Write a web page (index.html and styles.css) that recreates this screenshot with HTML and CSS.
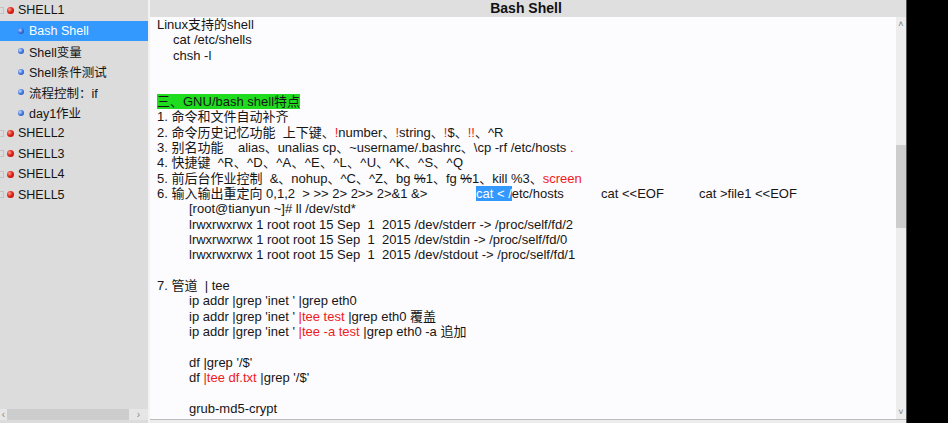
FILE: index.html
```html
<!DOCTYPE html>
<html>
<head>
<meta charset="utf-8">
<link rel="stylesheet" href="styles.css">
</head>
<body>
<div class="app">
  <aside class="side">
    <div class="tree">
      <div class="row top"><span class="exp"></span><span class="ball red"></span><span class="lbl">SHELL1</span></div>
      <div class="row child sel"><span class="ball blue"></span><span class="lbl">Bash Shell</span></div>
      <div class="row child"><span class="ball blue"></span><span class="lbl">Shell变量</span></div>
      <div class="row child"><span class="ball blue"></span><span class="lbl">Shell条件测试</span></div>
      <div class="row child"><span class="ball blue"></span><span class="lbl">流程控制：if</span></div>
      <div class="row child"><span class="ball blue"></span><span class="lbl">day1作业</span></div>
      <div class="row top"><span class="exp"></span><span class="ball red"></span><span class="lbl">SHELL2</span></div>
      <div class="row top"><span class="exp"></span><span class="ball red"></span><span class="lbl">SHELL3</span></div>
      <div class="row top"><span class="exp"></span><span class="ball red"></span><span class="lbl">SHELL4</span></div>
      <div class="row top"><span class="exp"></span><span class="ball red"></span><span class="lbl">SHELL5</span></div>
    </div>
    <div class="hscroll"><span class="arr">‹</span><span class="thumb"></span><span class="arr right">›</span></div>
  </aside>
  <main class="main">
    <div class="title">Bash Shell</div>
    <div class="body">
      <div class="doc">
<div class="ln">Linux支持的shell</div>
<div class="ln i1">cat /etc/shells</div>
<div class="ln i1">chsh -l</div>
<div class="ln"> </div>
<div class="ln"> </div>
<div class="ln"><span class="hl">三、GNU/bash shell特点</span></div>
<div class="ln">1. 命令和文件自动补齐</div>
<div class="ln">2. 命令历史记忆功能  上下键、<span class="r">!</span>number、<span class="r">!</span>string、<span class="r">!</span>$、<span class="r">!!</span>、^R</div>
<div class="ln">3. 别名功能    alias、unalias cp、~username/.bashrc、\cp -rf /etc/hosts <span class="r">.</span></div>
<div class="ln">4. 快捷键  <span class="ks">^R、^D、^A、^E、^L、^U、^K、^S、^Q</span></div>
<div class="ln">5. 前后台作业控制  &amp;、nohup、^C、^Z、bg <s>%</s>1、fg <s>%</s>1、kill %3、<span class="r">screen</span></div>
<div class="ln"><span class="tab t1">6. 输入输出重定向 0,1,2  &gt; &gt;&gt; 2&gt; 2&gt;&gt; 2&gt;&amp;1 &amp;&gt;</span><span class="tab t2"><span class="sel2">cat &lt; /</span>etc/hosts</span><span class="tab t3">cat &lt;&lt;EOF</span><span>cat &gt;file1 &lt;&lt;EOF</span></div>
<div class="ln i2">[root@tianyun ~]# ll /dev/std*</div>
<div class="ln i2">lrwxrwxrwx 1 root root 15 Sep  1  2015 /dev/stderr -&gt; /proc/self/fd/2</div>
<div class="ln i2">lrwxrwxrwx 1 root root 15 Sep  1  2015 /dev/stdin -&gt; /proc/self/fd/0</div>
<div class="ln i2">lrwxrwxrwx 1 root root 15 Sep  1  2015 /dev/stdout -&gt; /proc/self/fd/1</div>
<div class="ln"> </div>
<div class="ln">7. 管道  | tee</div>
<div class="ln i2">ip addr |grep 'inet ' |grep eth0</div>
<div class="ln i2">ip addr |grep 'inet ' <span class="r">|tee test</span> |grep eth0 覆盖</div>
<div class="ln i2">ip addr |grep 'inet ' <span class="r">|tee -a test</span> |grep eth0 -a 追加</div>
<div class="ln"> </div>
<div class="ln i2">df |grep '/$'</div>
<div class="ln i2">df <span class="r">|tee df.txt</span> |grep '/$'</div>
<div class="ln"> </div>
<div class="ln i2">grub-md5-crypt</div>
      </div>
      <div class="vscroll"><span class="varr">˄</span><span class="vthumb"></span><span class="varr down">˅</span></div>
    </div>
    <div class="foot"></div>
  </main>
  <div class="edge"></div>
</div>
</body>
</html>
```

FILE: styles.css
```css
* { box-sizing: border-box; }
html, body { margin: 0; padding: 0; }
body {
  width: 948px;
  height: 423px;
  overflow: hidden;
  background: #000;
  font-family: "Liberation Sans", "Noto Sans CJK SC", sans-serif;
  font-size: 13px;
  color: #161616;
}
.app {
  display: flex;
  width: 948px;
  height: 423px;
}
.side {
  width: 150px;
  flex: none;
  background: #dcdcdc;
  border-right: 2px solid #f2f2f2;
  display: flex;
  flex-direction: column;
  overflow: hidden;
  font-size: 12.5px;
}
.tree { flex: 1; }
.row {
  height: 20.5px;
  display: flex;
  align-items: center;
  white-space: nowrap;
  color: #141414;
}
.row.top { padding-left: 0; }
.row.child { padding-left: 18px; }
.row.sel { background: #3399ff; color: #fff; }
.exp {
  width: 4px;
  height: 7px;
  border: 1px solid #c4c4c4;
  border-left: none;
  margin-right: 3px;
}
.ball {
  width: 7px;
  height: 7px;
  border-radius: 50%;
  margin-right: 4px;
  flex: none;
}
.ball.red { background: radial-gradient(circle at 35% 35%, #ff9c8c 0, #e02418 45%, #9a0c06 100%); }
.ball.blue { background: radial-gradient(circle at 35% 35%, #c8dcff 0, #4a7fe0 45%, #1c3c9c 100%); width: 6px; height: 6px; margin-right: 5px; }
.row.sel .ball.blue { background: radial-gradient(circle at 35% 35%, #b8d0ff 0, #3a6cd8 50%, #20409a 100%); }
.hscroll {
  height: 11px;
  margin-bottom: 3px;
  background: #e6e6e6;
  display: flex;
  align-items: center;
  font-size: 10px;
  color: #888;
}
.hscroll .arr { width: 7px; text-align: center; line-height: 10px; }
.hscroll .arr.right { width: 19px; }
.hscroll .thumb { flex: 1; height: 100%; background: #cdcdcd; }
.main {
  width: 756px;
  flex: none;
  display: flex;
  flex-direction: column;
  background: #fcfbfd;
}
.title {
  height: 17px;
  background: #dfdfdf;
  text-align: center;
  font-weight: bold;
  font-size: 14px;
  line-height: 17px;
  color: #111;
  padding-right: 4px;
}
.body {
  flex: 1;
  display: flex;
  overflow: hidden;
}
.doc {
  flex: 1;
  padding-left: 7px;
  overflow: hidden;
}
.ln {
  height: 15.36px;
  line-height: 15.36px;
  white-space: pre;
}
.i1 { padding-left: 16px; }
.i2 { padding-left: 32px; }
.hl { background: #1fdc1f; }
.r { color: #f01c1c; }
.ks { letter-spacing: 0.25px; word-spacing: 0; }
.tab { display: inline-block; }
.t1 { width: 319px; }
.t2 { width: 125px; }
.t3 { width: 98px; }
.sel2 { background: #3399ff; color: #fff; }
.vscroll {
  width: 10px;
  flex: none;
  background: #ededed;
  display: flex;
  flex-direction: column;
  font-size: 9px;
  color: #777;
  text-align: center;
}
.varr { height: 12px; line-height: 14px; }
.vthumb { height: 83px; margin-top: 116px; background: #cdcdcd; }
.varr.down { margin-top: auto; line-height: 10px; }
.foot {
  height: 4px;
  border-top: 1px solid #bcbcbc;
  background: #ececec;
}
.edge {
  width: 1px;
  background: #555;
  flex: none;
}
```
